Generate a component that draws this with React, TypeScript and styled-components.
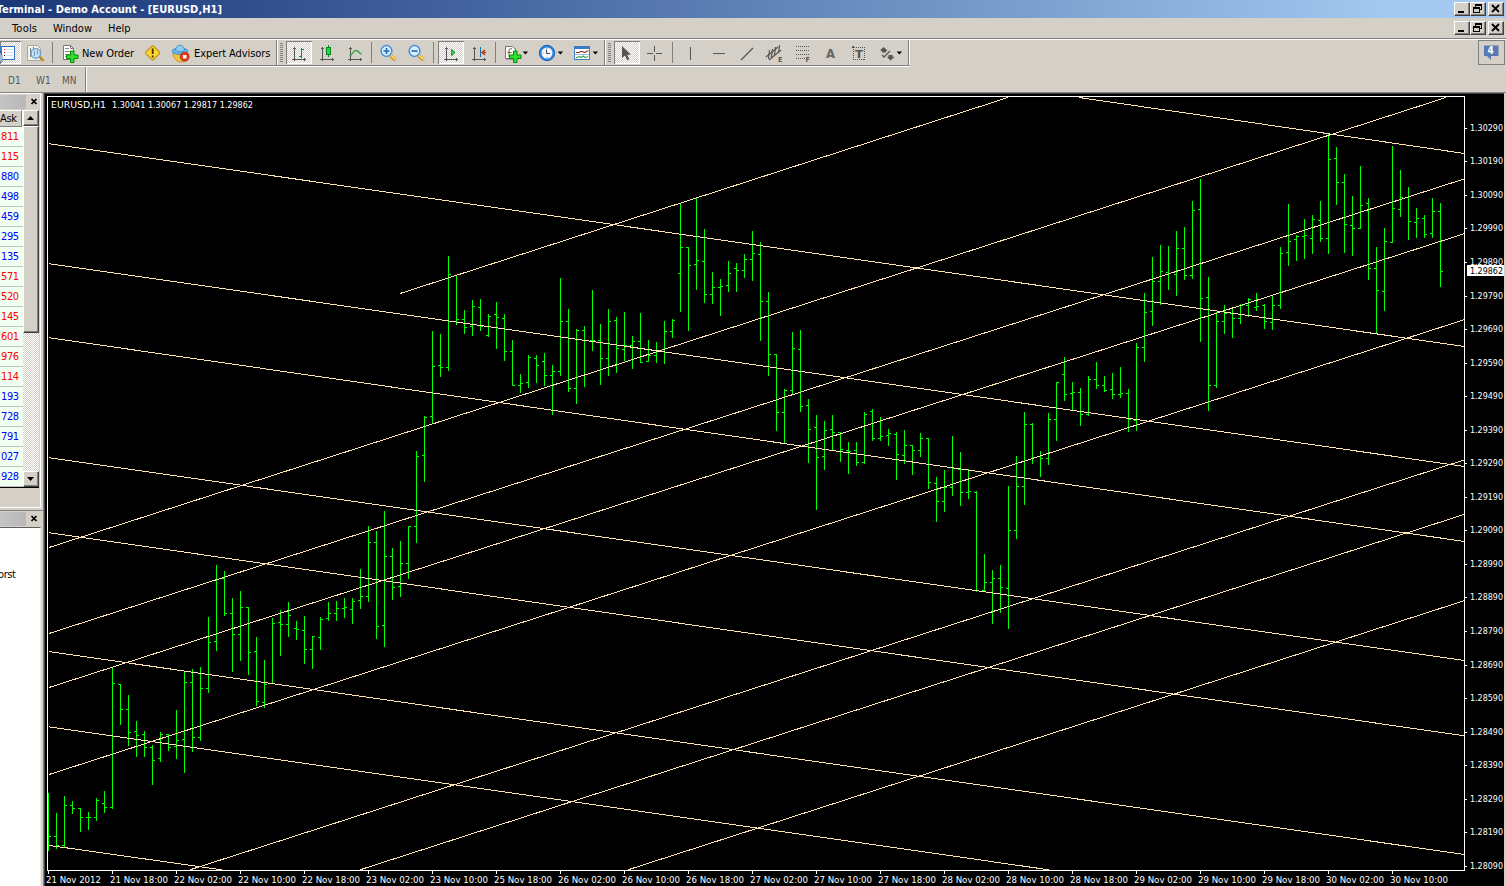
import React from "react";
import styled, { createGlobalStyle, css } from "styled-components";

const FACE = "#d4d0c8";
const SHADOW = "#808080";
const INK = "#555555";
const UI_FONT = '"DejaVu Sans Condensed", "DejaVu Sans", sans-serif';

const Global = createGlobalStyle`
  * { box-sizing: border-box; }
  html, body { margin: 0; padding: 0; }
  body { width: 1506px; height: 886px; overflow: hidden; background: ${FACE}; font-family: ${UI_FONT}; }
  svg { display: block; flex: none; }
`;

const dither = css`
  background: repeating-conic-gradient(#ffffff 0 25%, ${FACE} 0 50%) 0 0 / 2px 2px;
`;

const Window = styled.div`
  width: 1506px;
  height: 886px;
  display: flex;
  flex-direction: column;
  overflow: hidden;
  background: ${FACE};
`;

const TitleBar = styled.div`
  height: 18px;
  flex: none;
  display: flex;
  justify-content: space-between;
  background: linear-gradient(90deg, #1a3777 0, #43639f 460px, #7193c4 920px, #a3c7ef 1380px, #a6caf0 100%);
`;

const Title = styled.div`
  width: 222px;
  display: flex;
  justify-content: flex-end;
  overflow: hidden;
  white-space: pre;
  color: #fff;
  font-size: 11px;
  font-weight: bold;
  line-height: 19px;
  letter-spacing: 0.04px;
`;

const Controls = styled.div`
  display: flex;
  padding: 2px 2px 0 0;
  height: 16px;
`;

const ControlButton = styled.div<{ $gap?: boolean }>`
  width: 16px;
  height: 14px;
  margin-left: ${(p) => (p.$gap ? 2 : 0)}px;
  background: ${FACE};
  border: 1px solid;
  border-color: #fff #404040 #404040 #fff;
  box-shadow: inset -1px -1px 0 ${SHADOW};
`;

const MenuBar = styled.div`
  height: 20px;
  flex: none;
  display: flex;
  justify-content: space-between;
  padding-top: 1px;
`;

const MenuItems = styled.div`
  display: flex;
  padding-left: 12px;
`;

const MenuItem = styled.div<{ $w: number; $ls?: number }>`
  width: ${(p) => p.$w}px;
  font-size: 11px;
  line-height: 19px;
  letter-spacing: ${(p) => p.$ls ?? 0}px;
  white-space: nowrap;
`;

const ToolRow = styled.div`
  height: 29px;
  flex: none;
  display: flex;
  justify-content: space-between;
  border-top: 1px solid ${SHADOW};
  box-shadow: inset 0 1px 0 #fff;
  padding: 2px 0 0;
`;

const ToolStrip = styled.div`
  display: flex;
  width: 910px;
  height: 26px;
  margin-top: -1px;
  border-bottom: 1px solid ${SHADOW};
  padding-top: 1px;
  box-shadow: 0 1px 0 #fff;
`;

const Slot = styled.div<{ $w: number; $pressed?: boolean }>`
  width: ${(p) => p.$w}px;
  height: 24px;
  flex: none;
  overflow: hidden;
  ${(p) =>
    p.$pressed &&
    css`
      height: 23px;
      ${dither}
      box-shadow: inset 1px 1px 0 ${SHADOW}, inset -1px -1px 0 #fff;
    `}
`;

const ToolLabel = styled.div<{ $w: number; $ls: number }>`
  width: ${(p) => p.$w}px;
  flex: none;
  font-size: 11px;
  line-height: 25px;
  letter-spacing: ${(p) => p.$ls}px;
  white-space: nowrap;
`;

const Divider = styled.div`
  width: 1px;
  height: 21px;
  margin-top: 1px;
  background: ${SHADOW};
  flex: none;
`;

const StripEdge = styled.div`
  width: 2px;
  height: 25px;
  margin-top: -1px;
  flex: none;
  background: linear-gradient(90deg, ${SHADOW} 50%, #fff 50%);
`;

const Grip = styled.div`
  width: 3px;
  height: 19px;
  margin: 2px 3px 0 2px;
  flex: none;
  background: repeating-linear-gradient(${SHADOW} 0 1px, ${FACE} 1px 2px);
`;

const Chat = styled.div`
  width: 27px;
  height: 25px;
  margin: -1px 1px 0 0;
  border: 1px solid ${SHADOW};
`;

const FrameRow = styled.div`
  height: 25px;
  flex: none;
  display: flex;
`;

const FrameStrip = styled.div`
  display: flex;
  width: 87px;
  padding-left: 8px;
  border-right: 1px solid #fff;
  box-shadow: inset -1px 0 0 ${SHADOW};
`;

const Frame = styled.div<{ $w: number }>`
  width: ${(p) => p.$w}px;
  flex: none;
  color: #555;
  font-size: 10px;
  line-height: 28px;
`;

const Body = styled.div`
  flex: 1;
  min-height: 0;
  display: flex;
`;

const Side = styled.div`
  width: 43px;
  flex: none;
  display: flex;
  flex-direction: column;
  border-top: 1px solid ${SHADOW};
`;

const Panel = styled.div<{ $h: number }>`
  height: ${(p) => p.$h}px;
  width: 41px;
  flex: none;
  border-top: 1px solid #fff;
  border-right: 1px solid #fff;
  border-bottom: 1px solid #fff;
`;

const PanelHead = styled.div`
  height: 14px;
  margin: 1px 0;
  display: flex;
  align-items: stretch;
`;

const PanelTitle = styled.div`
  width: 26px;
  margin-right: 4px;
  background: linear-gradient(90deg, #c4c4c4, #b8b8b8);
`;

const ListArea = styled.div`
  display: flex;
  width: 39px;
  height: 378px;
  border-bottom: 1px solid #000;
`;

const Quotes = styled.div`
  width: 23px;
  overflow: hidden;
  background: #f0fff0;
`;

const QuoteHead = styled.div`
  width: 22px;
  height: 17px;
  background: ${FACE};
  border-top: 1px solid #fff;
  border-right: 1px solid ${SHADOW};
  border-bottom: 1px solid ${SHADOW};
  font-size: 11px;
  line-height: 16px;
  letter-spacing: -0.3px;
`;

const Quote = styled.div<{ $up: boolean }>`
  height: 20px;
  padding-left: 1px;
  border-bottom: 1px solid #c0c0c0;
  color: ${(p) => (p.$up ? "#0000ff" : "#ff0000")};
  font-size: 11px;
  line-height: 20px;
  letter-spacing: -0.4px;
`;

const Scroll = styled.div`
  width: 16px;
  display: flex;
  flex-direction: column;
  ${dither}
`;

const ScrollPiece = styled.div<{ $h: number; $push?: boolean }>`
  height: ${(p) => p.$h}px;
  margin-top: ${(p) => (p.$push ? "auto" : "0")};
  background: ${FACE};
  border: 1px solid;
  border-color: #fff #404040 #404040 #fff;
  box-shadow: inset -1px -1px 0 ${SHADOW};
`;

const Navigator = styled.div`
  flex: 1;
  margin-top: 2px;
  border-top: 1px solid ${SHADOW};
`;

const Tree = styled.div`
  width: 41px;
  height: 360px;
  padding-top: 38px;
  background: #fff;
  border-top: 1px solid #606060;
  border-right: 1px solid #ece9e2;
  font-size: 11px;
  line-height: 18px;
  letter-spacing: -0.4px;
  text-indent: -2px;
`;

const ChartFrame = styled.div`
  width: 1461px;
  flex: none;
  padding: 1px 0 0 1px;
  border-left: 1px solid ${SHADOW};
  border-top: 1px solid ${SHADOW};
  background: #404040;
`;

const ChartCanvas = styled.svg`
  background: #000;
`;

const RightEdge = styled.div`
  flex: 1;
  border-top: 1px solid ${SHADOW};
  background: ${FACE};
`;

function Cross() {
  return (
    <svg width="10" height="14" viewBox="0 0 10 14">
      <path d="M1.500 4 L6.500 9 M6.500 4 L1.500 9" stroke="#000" strokeWidth="1.700" />
    </svg>
  );
}

function WindowControls() {
  return (
    <Controls>
      <ControlButton>
        <svg width="14" height="12" viewBox="0 0 14 12"><rect x="3" y="8" width="6" height="2" /></svg>
      </ControlButton>
      <ControlButton>
        <svg width="14" height="12" viewBox="0 0 14 12" shapeRendering="crispEdges" fill="none" stroke="#000">
          <path d="M4.500 4 V1.500 H10.500 V6.500 H9 M4 2.500 H11 M2.500 4.500 H8.500 V9.500 H2.500 Z M2 5.500 H9" />
        </svg>
      </ControlButton>
      <ControlButton $gap>
        <svg width="14" height="12" viewBox="0 0 14 12">
          <path d="M3 2 L10 9 M10 2 L3 9" stroke="#000" strokeWidth="1.800" />
        </svg>
      </ControlButton>
    </Controls>
  );
}

// Tool icons share one horizontal scale: x is where the slot begins on the bar.
type ToolProps = { x: number; w: number; pressed?: boolean; children?: React.ReactNode };
function Tool({ x, w, pressed, children }: ToolProps) {
  return (
    <Slot $w={w} $pressed={pressed}>
      <svg width={w} height="24" viewBox={`${x} 41 ${w} 24`}>{children}</svg>
    </Slot>
  );
}

function Axes({ x }: { x: number }) {
  return (
    <path
      d={`M${x + 0.5} 47V61 M${x - 2} 59.5H${x + 12} M${x - 1} 48.5h3 M${x + 10.5} 58v3`}
      stroke={INK}
      fill="none"
      shapeRendering="crispEdges"
    />
  );
}

function Drop({ x }: { x: number }) {
  return <path d={`M${x} 51.5h5.4l-2.7 3z`} fill="#000" />;
}

function Lens({ x, plus }: { x: number; plus?: boolean }) {
  return (
    <g>
      <path d={`M${x + 10.5} 55.5l5 4.5`} stroke="#b98a20" strokeWidth="3.6" />
      <path d={`M${x + 10.5} 55l5 4.5`} stroke="#ffd75a" strokeWidth="2" />
      <circle cx={x + 6.5} cy="51" r="5.4" fill="#d8efff" stroke="#4a8cd8" strokeWidth="1.5" />
      <path d={`M${x + 3.5} 51h6${plus ? "m-3 -3v6" : ""}`} stroke="#2868b8" strokeWidth="1.7" />
    </g>
  );
}

function Plus({ x, y }: { x: number; y: number }) {
  return (
    <path
      d={`M${x + 4} ${y}h3.5v4h4v3.5h-4v4H${x + 4}v-4h-4v-3.5h4z`}
      fill="#2fe02f"
      stroke="#078a07"
      strokeWidth="1"
    />
  );
}

function Toolbar() {
  return (
    <ToolStrip>
      <Tool x={0} w={21} pressed>
        <rect x="-3" y="46.500" width="17.500" height="13" fill="#fff" stroke="#2f6fc0" />
        <rect x="-3" y="46" width="5" height="14" fill="#3a7fd0" />
        <path d="M4 49.500h1M4 52.500h1" stroke="#e00" />
        <path d="M4 55.500h1" stroke="#000" />
        <path d="M6 49.500h7M6 52.500h7M6 55.500h7" stroke="#d4e2f6" />
        <path d="M0 62V54l1-3 1 5v6z" fill="#e8f2ff" stroke="#1d4f90" strokeWidth=".7" />
      </Tool>
      <Tool x={21} w={31}>
        <path d="M27.500 45.500h10l3 3v12h-13z" fill="#f5f3ee" stroke="#aaa69c" />
        <path d="M30.500 48v9M33.500 47v5M37.500 48v4" stroke="#777" />
        <path d="M39 56l4.500 5" stroke="#c08c1c" strokeWidth="2.600" />
        <circle cx="35.800" cy="53.400" r="4.800" fill="#bfe0fa" fillOpacity=".9" stroke="#6ea0cc" strokeWidth="1.400" />
        <path d="M34.500 51v5M37.500 50.500v4" stroke="#7c98b0" />
      </Tool>
      <Divider />
      <Tool x={53} w={29}>
        <path d="M63.500 45.500h7l3 3v11h-10z" fill="#fff" stroke="#777" />
        <path d="M70.500 45.500v3h3" fill="none" stroke="#777" />
        <path d="M65 48.500h4M65 51.500h7M65 54.500h6M65 56.500h4" stroke="#888" />
        <Plus x={66.5} y={51} />
      </Tool>
      <ToolLabel $w={53} $ls={-0.1}>New Order</ToolLabel>
      <Tool x={135} w={35}>
        <rect x="147.300" y="47.500" width="10.800" height="10.800" rx="1.500" transform="rotate(45 152.700 52.900)" fill="#ffd435" stroke="#b98a08" />
        <path d="M152.700 48.500v5.500M152.700 55.500v2" stroke="#4a3500" strokeWidth="1.900" />
      </Tool>
      <Tool x={170} w={24}>
        <path d="M173 53c1 6 4 9 8 9s6-3 7-9z" fill="#f2c63c" stroke="#b98416" strokeWidth=".8" />
        <ellipse cx="180" cy="51.200" rx="8" ry="3.200" fill="#6db7e8" stroke="#3b84bc" strokeWidth=".8" />
        <path d="M175.500 50.500c0-7 9-7 9 0c-2 1.600-7 1.600-9 0z" fill="#8bcdf5" stroke="#3b84bc" strokeWidth=".8" />
        <circle cx="184.700" cy="56.700" r="4.500" fill="#e03a1c" stroke="#a81a08" strokeWidth=".6" />
        <rect x="183" y="55" width="3.500" height="3.500" fill="#fff" />
      </Tool>
      <ToolLabel $w={82} $ls={-0.08}>Expert Advisors</ToolLabel>
      <StripEdge />
      <Grip />
      <Tool x={286} w={26} pressed>
        <Axes x={294} />
        <path d="M301.500 47.500V58M299 56.500h2M302 49.500h2" stroke="#0a9420" shapeRendering="crispEdges" />
      </Tool>
      <Tool x={312} w={29}>
        <Axes x={322} />
        <path d="M328.500 45v12" stroke="#0a8420" />
        <rect x="326.500" y="47.500" width="4" height="7" fill="#22d84a" stroke="#0a8420" />
      </Tool>
      <Tool x={341} w={30}>
        <Axes x={350} />
        <path d="M349.500 56c3-1 3.500-5.500 6.500-5.500 2.500 0 3 3 5.500 3.500" fill="none" stroke="#2ea043" strokeWidth="1.300" />
      </Tool>
      <Divider />
      <Tool x={372} w={30}><Lens x={380} plus /></Tool>
      <Tool x={402} w={31}><Lens x={408} /></Tool>
      <Divider />
      <Slot $w={4} />
      <Tool x={438} w={26} pressed>
        <Axes x={446} />
        <path d="M451.700 49.500v6l3.300-3z" fill="#46e05a" stroke="#0a8420" />
      </Tool>
      <Tool x={464} w={31}>
        <Axes x={474} />
        <path d="M480.500 47v10" stroke="#1a6fa8" />
        <path d="M482 52.500h4M485 50l-3 2.500 3 2.500" fill="none" stroke="#c43a10" strokeWidth="1.400" />
      </Tool>
      <Divider />
      <Tool x={496} w={38}>
        <path d="M506.500 48.500h9v11h-9z" fill="#ddd" stroke="#999" />
        <path d="M505.500 46.500h7l3 3v9h-10z" fill="#fff" stroke="#777" />
        <path d="M512 49c-2-1-3 0-3 2v6M507.500 52.500h4" fill="none" stroke="#6a5a3a" />
        <Plus x={509.5} y={51} />
        <Drop x={522.7} />
      </Tool>
      <Tool x={534} w={35}>
        <circle cx="547" cy="53" r="6.700" fill="#f2f8ff" stroke="#2c84e4" strokeWidth="2.400" />
        <circle cx="547" cy="53" r="7.700" fill="none" stroke="#0e4ca0" strokeWidth=".7" />
        <path d="M546.500 49.500v4h3.500" fill="none" stroke="#444" strokeWidth="1" />
        <path d="M547 48v1M547 57v1M542.500 53h1" stroke="#888" />
        <Drop x={557.7} />
      </Tool>
      <Tool x={569} w={35}>
        <rect x="574.500" y="46.500" width="15" height="13" fill="#fff" stroke="#3c7cc4" />
        <rect x="574" y="46" width="16" height="3" fill="#3c7cc4" />
        <path d="M575 54.500h14" stroke="#9cbce4" />
        <path d="M576 52.500h3l1.500-1h2l1.500 1h1l2-1.500h1.500" fill="none" stroke="#983020" strokeWidth="1.100" />
        <path d="M576 58l3-1.500 2 1 2-1.500 2 1.500 3-1" fill="none" stroke="#2ba03c" strokeWidth="1.100" />
        <Drop x={592.7} />
      </Tool>
      <StripEdge />
      <Grip />
      <Tool x={614} w={26} pressed>
        <path d="M622 46v12l3-2.500 2.200 4.800 2.200-1-2.200-4.600h3.800z" fill={INK} />
      </Tool>
      <Tool x={640} w={32}>
        <path d="M647 53.500h6M656 53.500h6M654.500 46v6M654.500 55v6" stroke={INK} shapeRendering="crispEdges" />
      </Tool>
      <Divider />
      <Tool x={673} w={30}><path d="M690.500 47v13" stroke={INK} /></Tool>
      <Tool x={703} w={30}><path d="M713 53.500h12" stroke={INK} /></Tool>
      <Tool x={733} w={28}><path d="M741 60L753 48" stroke={INK} strokeWidth="1.300" /></Tool>
      <Tool x={761} w={29}>
        <path d="M766 57l12-10M769 60l12-10" stroke={INK} strokeWidth="1.200" />
        <path d="M769.500 50l-1 9M772.500 49l-1 9M775.500 47l-1 8M779.500 45l-1 8" stroke={INK} strokeWidth="1.200" />
        <text x="778" y="62" fontSize="7" fontWeight="bold" fill={INK}>E</text>
      </Tool>
      <Tool x={790} w={28}>
        <path d="M796 46.500h14M796 50.500h14M796 54.500h14M796 58.500h9" stroke={INK} strokeDasharray="1 1" shapeRendering="crispEdges" />
        <text x="805.500" y="62" fontSize="7" fontWeight="bold" fill={INK}>F</text>
      </Tool>
      <Tool x={818} w={28}>
        <text x="826" y="58" fontSize="12" fontWeight="bold" fill="#666" textLength="9" lengthAdjust="spacingAndGlyphs">A</text>
      </Tool>
      <Tool x={846} w={28}>
        <rect x="853.500" y="47.500" width="11" height="12" fill="none" stroke={INK} strokeDasharray="1 1" shapeRendering="crispEdges" />
        <rect x="852" y="46" width="2" height="2" fill={INK} />
        <text x="855" y="58" fontSize="11" fontWeight="bold" fill={INK} textLength="8" lengthAdjust="spacingAndGlyphs">T</text>
      </Tool>
      <Tool x={874} w={34}>
        <path d="M883.500 47l4 3.500-1.500.5v1.500h-4V51l-2-.5zM890.500 60.500l4-3.500-2-.5V55h-4v1.500l-1.500.5z" fill={INK} />
        <path d="M882 55l2 2 3-3 3-3" fill="none" stroke={INK} strokeWidth="1.300" />
        <Drop x={896.7} />
      </Tool>
      <StripEdge />
    </ToolStrip>
  );
}

const quotes: [string, boolean][] = [
  ["811", false], ["115", false], ["880", true], ["498", true], ["459", true], ["295", true],
  ["135", true], ["571", false], ["520", false], ["145", false], ["601", false], ["976", false],
  ["114", false], ["193", true], ["728", true], ["791", true], ["027", true], ["928", true],
];

// high, low, open, close for each hour
const bars: [number, number, number, number][] = [
  [793,850,836,836],[813,848,836,845],[796,846,845,805],[801,813,805,808],[808,831,808,817],[812,829,817,817],
  [798,820,817,800],[791,812,803,807],[668,808,807,683],[684,724,684,709],[695,745,709,732],[721,756,731,735],
  [731,756,734,747],[745,784,747,760],[732,761,758,734],[734,750,734,747],[710,758,746,740],[671,772,739,682],
  [669,751,682,737],[667,740,737,688],[617,692,688,642],[565,650,641,579],[571,615,578,613],[598,671,613,634],
  [591,660,634,607],[607,674,607,652],[637,705,651,701],[660,707,702,684],[618,683,683,623],[610,655,622,624],
  [602,636,624,615],[621,639,628,629],[616,663,630,649],[636,668,649,636],[617,649,637,619],[602,620,618,613],
  [601,620,613,608],[598,617,608,607],[598,623,609,601],[569,608,600,596],[526,601,596,542],[531,638,542,626],
  [511,646,625,556],[548,599,556,587],[541,596,586,563],[526,578,563,526],[451,542,526,456],[416,481,455,417],
  [331,423,416,366],[334,376,365,367],[256,370,367,274],[275,324,275,319],[310,333,319,327],[300,335,326,306],
  [299,330,307,326],[314,336,335,316],[302,348,314,317],[314,360,318,351],[340,385,351,385],[374,392,385,383],
  [355,387,382,357],[355,382,358,365],[353,385,361,375],[365,414,375,371],[278,375,371,321],[309,391,321,388],
  [329,403,388,330],[326,386,330,340],[290,350,340,340],[324,384,340,358],[309,375,358,321],[317,372,320,348],
  [312,360,349,345],[336,368,345,341],[313,362,341,362],[340,361,361,355],[342,362,355,351],[321,363,351,331],
  [319,337,331,320],[203,311,273,247],[247,330,247,265],[197,289,264,260],[229,302,261,294],[272,303,294,287],
  [279,315,287,286],[261,291,285,273],[263,291,268,270],[254,277,270,259],[231,280,259,253],[242,340,254,301],
  [292,375,301,354],[354,430,354,412],[389,443,412,390],[332,393,390,348],[330,411,349,406],[399,462,405,429],
  [415,509,427,457],[421,469,456,430],[415,450,429,432],[432,461,432,449],[442,473,450,451],[442,465,450,462],
  [412,463,462,414],[409,440,411,438],[417,440,438,436],[429,445,435,433],[432,479,434,454],[430,463,455,445],
  [445,474,445,450],[433,456,450,438],[438,488,438,482],[477,521,483,501],[470,511,501,487],[436,495,487,468],
  [452,505,469,492],[469,498,492,491],[491,591,492,590],[554,591,590,582],[570,623,582,578],[565,612,578,587],
  [486,628,588,530],[456,538,530,486],[412,504,486,424],[423,463,424,457],[451,476,456,458],[413,464,458,419],
  [382,440,419,382],[357,400,374,394],[382,410,393,392],[388,425,392,414],[376,415,414,379],[362,388,379,385],
  [376,391,385,390],[373,398,389,394],[367,397,394,393],[389,431,393,419],[343,430,420,347],[293,361,347,312],
  [257,325,311,281],[245,304,281,271],[246,289,272,273],[231,295,274,248],[227,279,248,275],[201,278,275,210],
  [179,341,209,298],[277,410,297,385],[312,387,385,321],[305,333,321,313],[307,337,313,318],[304,323,318,305],
  [298,316,305,299],[293,310,307,306],[304,328,305,321],[296,329,322,305],[247,308,305,253],[204,265,252,241],
  [235,260,239,236],[219,258,236,235],[215,253,238,219],[201,241,220,238],[134,253,238,159],[147,204,158,182],
  [174,252,182,224],[196,255,225,228],[166,228,228,205],[198,279,203,268],[247,333,268,290],[228,310,291,241],
  [146,242,242,208],[170,216,209,197],[187,239,197,221],[208,237,222,218],[215,237,218,234],[198,237,233,211],
  [203,286,211,271],
];

const trends: [number, number, number, number][] = [
  [400,293.5,1008,97.5],[49,547.5,1446,97.5],[49,633.5,1464,179],[49,687.5,1464,233.8],[49,774.5,1464,319.8],
  [190,869.8,1464,460],[360,869.8,1464,514.5],[628,869.8,1464,600.8],
  [1079,97.5,1464,153.4],[49,143.7,1464,346.4],[49,263.7,1464,466.4],[49,337.7,1464,541.4],[49,457.7,1464,660.5],
  [49,532.7,1464,735.7],[49,651.6,1464,854.4],[49,726.8,1049,869.8],[49,845.4,222,869.8],
];

const times = [
  "21 Nov 2012", "21 Nov 18:00", "22 Nov 02:00", "22 Nov 10:00", "22 Nov 18:00", "23 Nov 02:00", "23 Nov 10:00",
  "25 Nov 18:00", "26 Nov 02:00", "26 Nov 10:00", "26 Nov 18:00", "27 Nov 02:00", "27 Nov 10:00", "27 Nov 18:00",
  "28 Nov 02:00", "28 Nov 10:00", "28 Nov 18:00", "29 Nov 02:00", "29 Nov 10:00", "29 Nov 18:00", "30 Nov 02:00",
  "30 Nov 10:00",
];

function Chart() {
  const path = bars
    .map(([h, l, o, c], i) => {
      const x = 48 + i * 8;
      const open = i ? `M${x - 2} ${o + 0.5}h2` : "";
      return `M${x + 0.5} ${h}V${l + 1}${open}M${x + 1} ${c + 0.5}h2`;
    })
    .join("");
  return (
    <ChartCanvas width="1459" height="792" viewBox="45 94 1459 792" fontFamily={UI_FONT} fontSize="9">
      <g shapeRendering="crispEdges" fill="none">
        <path d={path} stroke="#00ff00" />
        {trends.map(([x1, y1, x2, y2], i) => (
          <line key={i} x1={x1} y1={y1} x2={x2} y2={y2} stroke="#ffe4b5" />
        ))}
        <path d="M47.500 870.500V96.500H1464.500V870.500Z" stroke="#fff" />
      </g>
      <text x="51" y="108" fill="#fff" textLength="55" lengthAdjust="spacingAndGlyphs">EURUSD,H1</text>
      <text x="112" y="108" fill="#fff" textLength="141" lengthAdjust="spacingAndGlyphs">1.30041 1.30067 1.29817 1.29862</text>
      {Array.from({ length: 23 }, (_, i) => {
        const y = Math.round(127.8 + i * 33.545);
        return (
          <g key={i}>
            <rect x="1465" y={y} width="2" height="1" fill="#fff" />
            <text x="1470" y={y + 3} fill="#fff" textLength="33" lengthAdjust="spacingAndGlyphs">
              {(1.3029 - i * 0.001).toFixed(5)}
            </text>
          </g>
        );
      })}
      <rect x="1467" y="265" width="37" height="11" fill="#fff" />
      <text x="1470" y="274" fill="#000" textLength="33" lengthAdjust="spacingAndGlyphs">1.29862</text>
      {times.map((t, i) => (
        <g key={t}>
          <rect x={48 + i * 64} y="871" width="1" height="3" fill="#fff" />
          <text x={46 + i * 64} y="883" fill="#fff" textLength={i ? 58 : 55} lengthAdjust="spacingAndGlyphs">{t}</text>
        </g>
      ))}
    </ChartCanvas>
  );
}

export default function App() {
  return (
    <Window>
      <Global />
      <TitleBar>
        <Title>Terminal - Demo Account - [EURUSD,H1]</Title>
        <WindowControls />
      </TitleBar>
      <MenuBar>
        <MenuItems>
          <MenuItem $w={41} $ls={0.2}>Tools</MenuItem>
          <MenuItem $w={55}>Window</MenuItem>
          <MenuItem $w={40}>Help</MenuItem>
        </MenuItems>
        <WindowControls />
      </MenuBar>
      <ToolRow>
        <Toolbar />
        <Chat>
          <svg width="25" height="23" viewBox="0 0 25 23">
            <path d="M5 4.500h14.500v10.500H12v4l-4-4H5z" fill="#5878b4" />
            <text x="8.500" y="13" fontSize="10" fontWeight="bold" fill="#fff">4</text>
          </svg>
        </Chat>
      </ToolRow>
      <FrameRow>
        <FrameStrip>
          <Frame $w={28}>D1</Frame>
          <Frame $w={26}>W1</Frame>
          <Frame $w={20}>MN</Frame>
        </FrameStrip>
      </FrameRow>
      <Body>
        <Side>
          <Panel $h={415}>
            <PanelHead><PanelTitle /><Cross /></PanelHead>
            <ListArea>
              <Quotes>
                <QuoteHead>Ask</QuoteHead>
                <div>
                  {quotes.map(([q, up]) => <Quote key={q} $up={up}>{q}</Quote>)}
                </div>
              </Quotes>
              <Scroll>
                <ScrollPiece $h={16}>
                  <svg width="14" height="14" viewBox="0 0 14 14"><path d="M3 9h7L6.500 5z" /></svg>
                </ScrollPiece>
                <ScrollPiece $h={207} />
                <ScrollPiece $h={16} $push>
                  <svg width="14" height="14" viewBox="0 0 14 14"><path d="M3 5h7L6.500 9z" /></svg>
                </ScrollPiece>
              </Scroll>
            </ListArea>
          </Panel>
          <Navigator>
            <PanelHead><PanelTitle /><Cross /></PanelHead>
            <Tree>orst</Tree>
          </Navigator>
        </Side>
        <ChartFrame><Chart /></ChartFrame>
        <RightEdge />
      </Body>
    </Window>
  );
}
